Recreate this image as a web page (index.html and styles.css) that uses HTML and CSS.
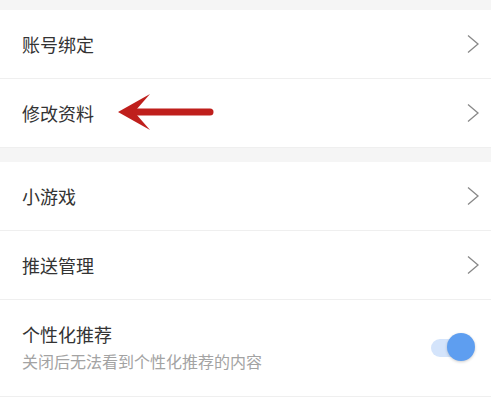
FILE: index.html
```html
<!DOCTYPE html>
<html lang="zh-CN">
<head>
    <meta charset="UTF-8">
    <meta name="viewport" content="width=device-width, initial-scale=1.0">
    <title>设置</title>
    <link rel="stylesheet" href="styles.css">
</head>
<body>
    <div class="page">
        <div class="gap gap-top"></div>
        <div class="group">
            <div class="row">
                <span class="label">账号绑定</span>
                <svg class="chevron" viewBox="0 0 14 20"><path d="M2 1.5 L12 10 L2 18.5" /></svg>
            </div>
            <div class="row row-mark">
                <span class="label">修改资料</span>
                <svg class="mark" viewBox="0 0 100 42">
                    <path d="M2 22 L34 4 L20 20 L20 24 L34 40 Z" fill="#bf1f1c" />
                    <line x1="20" y1="22" x2="94" y2="22" stroke="#bf1f1c" stroke-width="7" stroke-linecap="round" />
                </svg>
                <svg class="chevron" viewBox="0 0 14 20"><path d="M2 1.5 L12 10 L2 18.5" /></svg>
            </div>
        </div>
        <div class="gap"></div>
        <div class="group">
            <div class="row">
                <span class="label">小游戏</span>
                <svg class="chevron" viewBox="0 0 14 20"><path d="M2 1.5 L12 10 L2 18.5" /></svg>
            </div>
            <div class="row">
                <span class="label">推送管理</span>
                <svg class="chevron" viewBox="0 0 14 20"><path d="M2 1.5 L12 10 L2 18.5" /></svg>
            </div>
            <div class="row row-tall">
                <div class="text">
                    <span class="label">个性化推荐</span>
                    <span class="sub">关闭后无法看到个性化推荐的内容</span>
                </div>
                <div class="switch"><span class="knob"></span></div>
            </div>
        </div>
    </div>
</body>
</html>
```

FILE: styles.css
```css
body {
    margin: 0;
    background: #fff;
    font-family: "Noto Sans CJK SC", "Noto Sans", sans-serif;
}
.page {
    width: 491px;
}
.gap {
    height: 14px;
    background: #f5f5f5;
}
.gap-top {
    height: 10px;
}
.group {
    background: #fff;
    border-bottom: 1px solid #efefef;
}
.row {
    height: 68px;
    display: flex;
    align-items: center;
    justify-content: space-between;
    padding: 0 11px 0 22px;
    position: relative;
}
.row + .row {
    border-top: 1px solid #efefef;
}
.row-tall {
    height: 96px;
    padding-right: 16px;
}
.label {
    font-size: 18px;
    color: #333;
}
.text {
    display: flex;
    flex-direction: column;
    gap: 2px;
    margin-bottom: 2px;
}
.sub {
    font-size: 16px;
    color: #a3a3a3;
}
.chevron {
    width: 14px;
    height: 20px;
    fill: none;
    stroke: #888;
    stroke-width: 1.3;
}
.mark {
    position: absolute;
    left: 116px;
    top: 11px;
    width: 100px;
    height: 42px;
}
.switch {
    position: relative;
    width: 44px;
    height: 30px;
}
.switch::before {
    content: "";
    position: absolute;
    left: 0;
    top: 6px;
    width: 36px;
    height: 18px;
    border-radius: 9px;
    background: #d4e4fb;
}
.knob {
    position: absolute;
    right: 0;
    top: 0;
    width: 28px;
    height: 28px;
    border-radius: 50%;
    background: #5e9ef0;
    box-shadow: 0 1px 3px rgba(0, 0, 0, 0.2);
}
```
